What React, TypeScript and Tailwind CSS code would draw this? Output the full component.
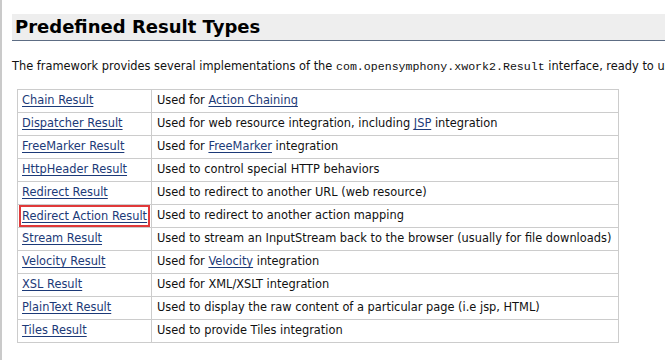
import React from 'react';

type Part = string | { link: string };

type ResultRow = {
    name: string;
    desc: Part[];
    highlight?: boolean;
};

const rows: ResultRow[] = [
    { name: 'Chain Result', desc: ['Used for ', { link: 'Action Chaining' }] },
    { name: 'Dispatcher Result', desc: ['Used for web resource integration, including ', { link: 'JSP' }, ' integration'] },
    { name: 'FreeMarker Result', desc: ['Used for ', { link: 'FreeMarker' }, ' integration'] },
    { name: 'HttpHeader Result', desc: ['Used to control special HTTP behaviors'] },
    { name: 'Redirect Result', desc: ['Used to redirect to another URL (web resource)'] },
    { name: 'Redirect Action Result', desc: ['Used to redirect to another action mapping'], highlight: true },
    { name: 'Stream Result', desc: ['Used to stream an InputStream back to the browser (usually for file downloads)'] },
    { name: 'Velocity Result', desc: ['Used for ', { link: 'Velocity' }, ' integration'] },
    { name: 'XSL Result', desc: ['Used for XML/XSLT integration'] },
    { name: 'PlainText Result', desc: ['Used to display the raw content of a particular page (i.e jsp, HTML)'] },
    { name: 'Tiles Result', desc: ['Used to provide Tiles integration'] },
];

const Link: React.FC<{ children: React.ReactNode }> = ({ children }) => (
    <a href="#" className="text-[#1c3a78] underline underline-offset-2">
        {children}
    </a>
);

const App: React.FC = () => {
    return (
        <div className="w-[665px] h-[360px] overflow-hidden bg-white border-l-2 border-[#cacaca] font-['DejaVu_Sans',sans-serif] text-[#111]">
            <div className="pl-[10px] pt-[14px]">
                <h2 className="h-[27px] bg-[#eeeeee] border-b border-[#5d6d84] pl-[3px] text-[18px] font-bold leading-[26px] text-black whitespace-nowrap">
                    Predefined Result Types
                </h2>
                <p className="mt-[18px] whitespace-nowrap text-[11.4px] leading-[14px]">
                    The framework provides several implementations of the{' '}
                    <code className="font-['Liberation_Mono',monospace] text-[11.6px]">com.opensymphony.xwork2.Result</code>{' '}
                    interface, ready to use them out of the box.
                </p>
                <table className="mt-[15px] ml-[5px] w-[602px] table-fixed border-collapse text-[11.4px]">
                    <colgroup>
                        <col className="w-[134px]" />
                        <col />
                    </colgroup>
                    <tbody>
                        {rows.map((row) => (
                            <tr key={row.name} className="h-[23px]">
                                <td className="border border-[#cccccc] pl-[4px] pr-0 whitespace-nowrap">
                                    <span className={row.highlight ? 'inline-block -ml-[3px] pl-[1px] pr-[1px] border-2 border-[#e0393a] leading-[18px]' : ''}>
                                        <Link>{row.name}</Link>
                                    </span>
                                </td>
                                <td className="border border-[#cccccc] px-[5px] whitespace-nowrap">
                                    {row.desc.map((part, i) =>
                                        typeof part === 'string' ? <span key={i}>{part}</span> : <Link key={i}>{part.link}</Link>
                                    )}
                                </td>
                            </tr>
                        ))}
                    </tbody>
                </table>
            </div>
        </div>
    );
};

export default App;
